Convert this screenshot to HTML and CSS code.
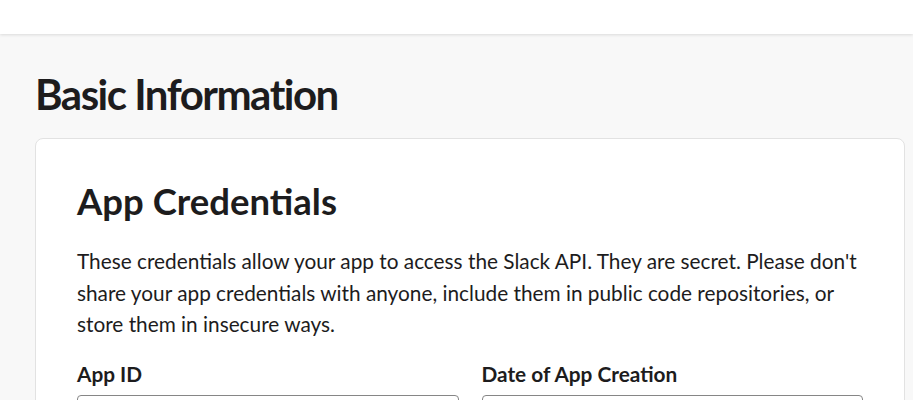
FILE: index.html
```html
<!DOCTYPE html>
<html lang="en">
<head>
<meta charset="utf-8">
<title>Basic Information</title>
<link rel="stylesheet" href="styles.css">
</head>
<body>
<header class="topbar"></header>
<main class="page">
  <h1 class="page-title">Basic Information</h1>
  <section class="card">
    <h2 class="card-title">App Credentials</h2>
    <p class="card-desc">These credentials allow your app to access the Slack API. They are secret. Please don't share your app credentials with anyone, include them in public code repositories, or store them in insecure ways.</p>
    <div class="fields">
      <div class="field">
        <label class="field-label">App ID</label>
        <div class="field-input"></div>
      </div>
      <div class="field">
        <label class="field-label">Date of App Creation</label>
        <div class="field-input"></div>
      </div>
    </div>
  </section>
</main>
</body>
</html>
```

FILE: styles.css
```css
* { box-sizing: border-box; }
html, body {
  margin: 0;
  padding: 0;
  background: #f8f8f8;
  font-family: Lato, "Noto Sans", sans-serif;
  color: #1d1c1d;
}
.topbar {
  height: 34px;
  background: #fff;
  box-shadow: 0 1px 3px rgba(0,0,0,0.12);
  position: relative;
  z-index: 1;
}
.page {
  padding: 34px 8px 0 35px;
}
.page-title {
  margin: 0;
  font-size: 42px;
  line-height: 52px;
  font-weight: 700;
  letter-spacing: -1.5px;
}
.card {
  margin-top: 18px;
  background: #fff;
  border: 1px solid #e2e2e2;
  border-radius: 8px;
  padding: 40px 41px 40px 41px;
}
.card-title {
  margin: 0;
  font-size: 36.5px;
  line-height: 44px;
  font-weight: 700;
}
.card-desc {
  margin: 22px 0 0;
  font-size: 20.8px;
  line-height: 31.5px;
}
.fields {
  margin-top: 20px;
  display: grid;
  grid-template-columns: 1fr 1fr;
  column-gap: 23px;
}
.field-label {
  display: block;
  font-size: 20.8px;
  line-height: 28px;
  font-weight: 700;
}
.field-input {
  margin-top: 7px;
  height: 40px;
  border: 1px solid #868686;
  border-radius: 4px;
  background: #fff;
}
```
